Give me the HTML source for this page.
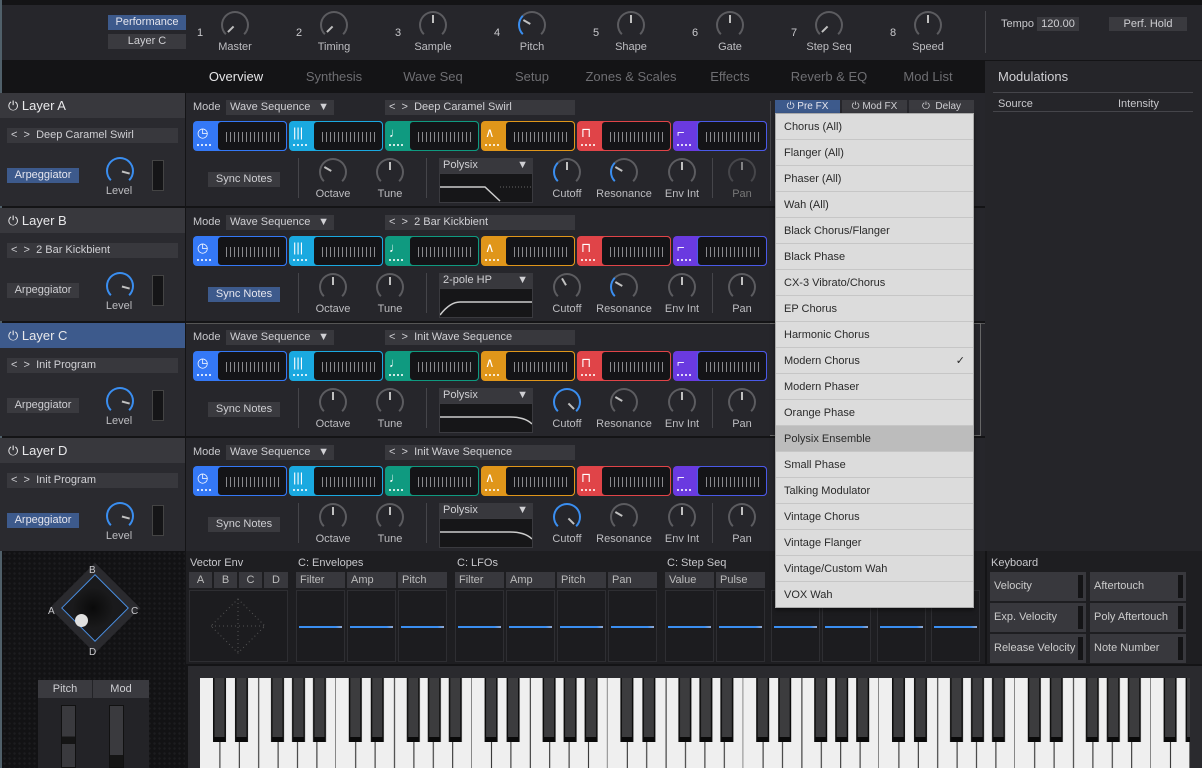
<!DOCTYPE html>
<html><head><meta charset="utf-8">
<style>
*{box-sizing:border-box;margin:0;padding:0}
body{width:1202px;height:768px;overflow:hidden;background:#141416;font-family:"Liberation Sans",sans-serif;font-size:11px;color:#c8c8cc;position:relative}
.a{position:absolute}
.t{position:absolute;white-space:nowrap}
.kn{position:absolute;width:28px;height:28px;border-radius:50%;border:2px solid #5c5c60;border-bottom-color:transparent}
.kn::after{content:'';position:absolute;left:11px;top:2px;width:2px;height:8px;background:#c0c0c0;transform-origin:1px 10px;transform:rotate(var(--r,0deg))}
.btn{position:absolute;background:#3a3a3f;color:#cfcfd3;text-align:center;font-size:11px;line-height:15px}
.blue{background:#3d5a8c;color:#e6e6ee}
.strip{position:absolute;top:28px;height:30px;width:94px;border-radius:4px}
.strip .in{position:absolute;left:24px;top:0;right:0;bottom:0;background:#141417;border-radius:4px;border:1px solid;
 background-image:repeating-linear-gradient(90deg,#8a8a8e 0 1px,transparent 1px 4px);background-size:calc(100% - 12px) 10px;background-position:8px 10px;background-repeat:no-repeat}
.strip .ic{position:absolute;left:4px;top:4px;color:#fff;font-size:13px}
.strip .dots{position:absolute;left:4px;top:23px;width:16px;height:2px;background:repeating-linear-gradient(90deg,#fff 0 2px,transparent 2px 4px);opacity:.8}
.layer{position:absolute;left:0;width:985px;height:113px}
.lh{position:absolute;left:0;top:0;width:185px;height:25px;background:#38383d;color:#e8e8ea;font-size:13px;line-height:25px;padding-left:8px}
.lb{position:absolute;left:0;top:25px;width:185px;height:88px;background:#2a2a2f}
.main{position:absolute;left:186px;top:0;width:799px;height:113px;background:#26262b}
.lbl{position:absolute;font-size:11px;color:#bdbdc1;text-align:center;width:70px}
.sel{position:absolute;background:#38383d;height:15px;line-height:15px;font-size:11px;color:#d0d0d4;padding-left:4px}
.vd{position:absolute;width:1px;background:#45454a}
.dd{position:absolute;left:775px;top:113px;width:199px;height:495px;background:#dcdcdc;border:1px solid #aaa;box-shadow:0 2px 4px rgba(0,0,0,.5)}
.dd div{height:26px;line-height:26px;padding-left:8px;color:#2a2a2a;font-size:11px;border-bottom:1px solid #c6c6c6}
.tab{position:absolute;top:69px;font-size:13px;color:#6e6e72;text-align:center;width:100px}
.env{position:absolute;top:572px;height:16px;background:#38383d;font-size:11px;color:#bbb;line-height:16px;padding-left:4px}
.eb{position:absolute;top:590px;height:72px;background:#1c1c1f;border:1px solid #2e2e32}
.eb::after{content:'';position:absolute;left:2px;right:2px;top:35px;height:2px;background:linear-gradient(90deg,#3a8ef0,#3a8ef0 85%,#9ac)}
.kb{position:absolute;height:29px;background:#38383d;font-size:11px;color:#ccc;line-height:29px;padding-left:4px}
.kb::after{content:'';position:absolute;right:3px;top:3px;width:5px;height:23px;background:#141416}
</style></head><body>
<div class="a" style="left:0;top:0;width:2px;height:768px;background:#50606a"></div>
<!-- top panel -->
<div class="a" style="left:2px;top:5px;width:1200px;height:55px;background:#26262b"></div>
<div class="btn blue" style="left:108px;top:15px;width:78px;height:15px">Performance</div>
<div class="btn" style="left:108px;top:34px;width:78px;height:15px">Layer C</div>
<div class="t" style="left:197px;top:27px">1</div><div class="kn" style="left:221px;top:11px;--r:-135deg;border-bottom-color:transparent"></div><div class="lbl" style="left:200px;top:41px">Master</div>
<div class="t" style="left:296px;top:27px">2</div><div class="kn" style="left:320px;top:11px;--r:-135deg"></div><div class="lbl" style="left:299px;top:41px">Timing</div>
<div class="t" style="left:395px;top:27px">3</div><div class="kn" style="left:419px;top:11px;--r:0deg"></div><div class="lbl" style="left:398px;top:41px">Sample</div>
<div class="t" style="left:494px;top:27px">4</div><div class="kn" style="left:518px;top:11px;--r:-60deg;border-left-color:#3a8ef0"></div><div class="lbl" style="left:497px;top:41px">Pitch</div>
<div class="t" style="left:593px;top:27px">5</div><div class="kn" style="left:617px;top:11px;--r:0deg"></div><div class="lbl" style="left:596px;top:41px">Shape</div>
<div class="t" style="left:692px;top:27px">6</div><div class="kn" style="left:716px;top:11px;--r:0deg"></div><div class="lbl" style="left:695px;top:41px">Gate</div>
<div class="t" style="left:791px;top:27px">7</div><div class="kn" style="left:815px;top:11px;--r:-135deg"></div><div class="lbl" style="left:794px;top:41px">Step Seq</div>
<div class="t" style="left:890px;top:27px">8</div><div class="kn" style="left:914px;top:11px;--r:0deg"></div><div class="lbl" style="left:893px;top:41px">Speed</div>
<div class="vd" style="left:985px;top:11px;height:42px"></div>
<div class="t" style="left:1001px;top:18px">Tempo</div>
<div class="btn" style="left:1037px;top:17px;width:42px;height:14px;line-height:14px">120.00</div>
<div class="btn" style="left:1109px;top:17px;width:78px;height:14px;line-height:14px">Perf. Hold</div>
<!-- nav -->
<div class="tab" style="left:186px;color:#e6e6e8">Overview</div>
<div class="tab" style="left:284px">Synthesis</div>
<div class="tab" style="left:383px">Wave Seq</div>
<div class="tab" style="left:482px">Setup</div>
<div class="tab" style="left:581px">Zones &amp; Scales</div>
<div class="tab" style="left:680px">Effects</div>
<div class="tab" style="left:779px">Reverb &amp; EQ</div>
<div class="tab" style="left:878px">Mod List</div>
<div class="a" style="left:985px;top:61px;width:217px;height:490px;background:#252529"></div>
<div class="t" style="left:998px;top:69px;font-size:13px;color:#d0d0d4">Modulations</div>
<div class="a" style="left:993px;top:92px;width:200px;height:1px;background:#45454a"></div>
<div class="t" style="left:998px;top:98px">Source</div><div class="t" style="left:1118px;top:98px">Intensity</div>
<div class="a" style="left:993px;top:111px;width:200px;height:1px;background:#45454a"></div>

<!-- LAYERS -->
<div class="layer" style="top:93px">
 <div class="lh">⏻ Layer A</div><div class="lb"></div>
 <div class="sel" style="left:7px;top:35px;width:171px">&lt; &nbsp;&gt; &nbsp;Deep Caramel Swirl</div>
 <div class="btn blue" style="left:7px;top:75px;width:72px">Arpeggiator</div>
 <div class="kn" style="left:106px;top:64px;--r:105deg;border-color:#3a8ef0;border-bottom-color:transparent"></div><div class="lbl" style="left:84px;top:92px">Level</div>
 <div class="a" style="left:152px;top:67px;width:12px;height:31px;background:#151517;border:1px solid #444"></div>
 <div class="main"></div>
 <div class="t" style="left:193px;top:8px">Mode</div>
 <div class="sel" style="left:226px;top:7px;width:108px">Wave Sequence<span style="position:absolute;right:5px">▼</span></div>
 <div class="sel" style="left:385px;top:7px;width:190px">&lt; &nbsp;&gt; &nbsp;Deep Caramel Swirl</div>
 <div class="strip" style="left:193px;background:#3478f6"><span class="ic">◷</span><i class="dots"></i><div class="in" style="border-color:#3478f6"></div></div>
 <div class="strip" style="left:289px;background:#1aa9e0"><span class="ic">|||</span><i class="dots"></i><div class="in" style="border-color:#1aa9e0"></div></div>
 <div class="strip" style="left:385px;background:#0f9a80"><span class="ic">♩</span><i class="dots"></i><div class="in" style="border-color:#0f9a80"></div></div>
 <div class="strip" style="left:481px;background:#e0961a"><span class="ic">∧</span><i class="dots"></i><div class="in" style="border-color:#e0961a"></div></div>
 <div class="strip" style="left:577px;background:#e04448"><span class="ic">⊓</span><i class="dots"></i><div class="in" style="border-color:#e04448"></div></div>
 <div class="strip" style="left:673px;background:#6a3ae0"><span class="ic">⌐</span><i class="dots"></i><div class="in" style="border-color:#4a5ae8"></div></div>
 <div class="btn" style="left:208px;top:79px;width:72px">Sync Notes</div>
 <div class="vd" style="left:298px;top:65px;height:40px"></div>
 <div class="kn" style="left:319px;top:65px;--r:-60deg"></div><div class="lbl" style="left:298px;top:95px">Octave</div>
 <div class="kn" style="left:376px;top:65px"></div><div class="lbl" style="left:355px;top:95px">Tune</div>
 <div class="vd" style="left:426px;top:65px;height:40px"></div>
 <div class="sel" style="left:439px;top:65px;width:94px">Polysix<span style="position:absolute;right:5px">▼</span></div>
 <div class="a" style="left:439px;top:80px;width:94px;height:30px;background:#161618;border:1px solid #3a3a3f"><svg width="92" height="28"><path d="M0 13 H45 L60 27" stroke="#ccc" fill="none" stroke-width="1.5"/><path d="M60 13 H92" stroke="#666" stroke-dasharray="1 2"/></svg></div>
 <div class="kn" style="left:553px;top:65px;border-left-color:#3a8ef0"></div><div class="lbl" style="left:532px;top:95px">Cutoff</div>
 <div class="kn" style="left:610px;top:65px;--r:-60deg;border-left-color:#3a8ef0"></div><div class="lbl" style="left:589px;top:95px">Resonance</div>
 <div class="kn" style="left:668px;top:65px"></div><div class="lbl" style="left:647px;top:95px">Env Int</div>
 <div class="vd" style="left:712px;top:65px;height:40px"></div>
 <div class="kn" style="left:728px;top:65px;opacity:.6"></div><div class="lbl" style="left:707px;top:95px;color:#777">Pan</div>
 <div class="vd" style="left:770px;top:8px;height:100px"></div>
</div>

<div class="layer" style="top:208px">
 <div class="lh">⏻ Layer B</div><div class="lb"></div>
 <div class="sel" style="left:7px;top:35px;width:171px">&lt; &nbsp;&gt; &nbsp;2 Bar Kickbient</div>
 <div class="btn" style="left:7px;top:75px;width:72px">Arpeggiator</div>
 <div class="kn" style="left:106px;top:64px;--r:105deg;border-color:#3a8ef0;border-bottom-color:transparent"></div><div class="lbl" style="left:84px;top:92px">Level</div>
 <div class="a" style="left:152px;top:67px;width:12px;height:31px;background:#151517;border:1px solid #444"></div>
 <div class="main"></div>
 <div class="t" style="left:193px;top:8px">Mode</div>
 <div class="sel" style="left:226px;top:7px;width:108px">Wave Sequence<span style="position:absolute;right:5px">▼</span></div>
 <div class="sel" style="left:385px;top:7px;width:190px">&lt; &nbsp;&gt; &nbsp;2 Bar Kickbient</div>
 <div class="strip" style="left:193px;background:#3478f6"><span class="ic">◷</span><i class="dots"></i><div class="in" style="border-color:#3478f6"></div></div>
 <div class="strip" style="left:289px;background:#1aa9e0"><span class="ic">|||</span><i class="dots"></i><div class="in" style="border-color:#1aa9e0"></div></div>
 <div class="strip" style="left:385px;background:#0f9a80"><span class="ic">♩</span><i class="dots"></i><div class="in" style="border-color:#0f9a80"></div></div>
 <div class="strip" style="left:481px;background:#e0961a"><span class="ic">∧</span><i class="dots"></i><div class="in" style="border-color:#e0961a"></div></div>
 <div class="strip" style="left:577px;background:#e04448"><span class="ic">⊓</span><i class="dots"></i><div class="in" style="border-color:#e04448"></div></div>
 <div class="strip" style="left:673px;background:#6a3ae0"><span class="ic">⌐</span><i class="dots"></i><div class="in" style="border-color:#4a5ae8"></div></div>
 <div class="btn blue" style="left:208px;top:79px;width:72px">Sync Notes</div>
 <div class="vd" style="left:298px;top:65px;height:40px"></div>
 <div class="kn" style="left:319px;top:65px"></div><div class="lbl" style="left:298px;top:95px">Octave</div>
 <div class="kn" style="left:376px;top:65px"></div><div class="lbl" style="left:355px;top:95px">Tune</div>
 <div class="vd" style="left:426px;top:65px;height:40px"></div>
 <div class="sel" style="left:439px;top:65px;width:94px">2-pole HP<span style="position:absolute;right:5px">▼</span></div>
 <div class="a" style="left:439px;top:80px;width:94px;height:30px;background:#161618;border:1px solid #3a3a3f"><svg width="92" height="28"><path d="M0 26 Q10 13 20 13 H92" stroke="#ccc" fill="none" stroke-width="1.5"/></svg></div>
 <div class="kn" style="left:553px;top:65px;--r:-30deg"></div><div class="lbl" style="left:532px;top:95px">Cutoff</div>
 <div class="kn" style="left:610px;top:65px;--r:-60deg;border-left-color:#3a8ef0"></div><div class="lbl" style="left:589px;top:95px">Resonance</div>
 <div class="kn" style="left:668px;top:65px"></div><div class="lbl" style="left:647px;top:95px">Env Int</div>
 <div class="vd" style="left:712px;top:65px;height:40px"></div>
 <div class="kn" style="left:728px;top:65px"></div><div class="lbl" style="left:707px;top:95px">Pan</div>
</div>

<div class="layer" style="top:323px">
 <div class="lh" style="background:#3d5a8c">⏻ Layer C</div><div class="lb"></div>
 <div class="sel" style="left:7px;top:35px;width:171px">&lt; &nbsp;&gt; &nbsp;Init Program</div>
 <div class="btn" style="left:7px;top:75px;width:72px">Arpeggiator</div>
 <div class="kn" style="left:106px;top:64px;--r:105deg;border-color:#3a8ef0;border-bottom-color:transparent"></div><div class="lbl" style="left:84px;top:92px">Level</div>
 <div class="a" style="left:152px;top:67px;width:12px;height:31px;background:#151517;border:1px solid #444"></div>
 <div class="main" style="border-top:1px solid #555"></div>
 <div class="t" style="left:193px;top:8px">Mode</div>
 <div class="sel" style="left:226px;top:7px;width:108px">Wave Sequence<span style="position:absolute;right:5px">▼</span></div>
 <div class="sel" style="left:385px;top:7px;width:190px">&lt; &nbsp;&gt; &nbsp;Init Wave Sequence</div>
 <div class="strip" style="left:193px;background:#3478f6"><span class="ic">◷</span><i class="dots"></i><div class="in" style="border-color:#3478f6"></div></div>
 <div class="strip" style="left:289px;background:#1aa9e0"><span class="ic">|||</span><i class="dots"></i><div class="in" style="border-color:#1aa9e0"></div></div>
 <div class="strip" style="left:385px;background:#0f9a80"><span class="ic">♩</span><i class="dots"></i><div class="in" style="border-color:#0f9a80"></div></div>
 <div class="strip" style="left:481px;background:#e0961a"><span class="ic">∧</span><i class="dots"></i><div class="in" style="border-color:#e0961a"></div></div>
 <div class="strip" style="left:577px;background:#e04448"><span class="ic">⊓</span><i class="dots"></i><div class="in" style="border-color:#e04448"></div></div>
 <div class="strip" style="left:673px;background:#6a3ae0"><span class="ic">⌐</span><i class="dots"></i><div class="in" style="border-color:#4a5ae8"></div></div>
 <div class="btn" style="left:208px;top:79px;width:72px">Sync Notes</div>
 <div class="vd" style="left:298px;top:65px;height:40px"></div>
 <div class="kn" style="left:319px;top:65px"></div><div class="lbl" style="left:298px;top:95px">Octave</div>
 <div class="kn" style="left:376px;top:65px"></div><div class="lbl" style="left:355px;top:95px">Tune</div>
 <div class="vd" style="left:426px;top:65px;height:40px"></div>
 <div class="sel" style="left:439px;top:65px;width:94px">Polysix<span style="position:absolute;right:5px">▼</span></div>
 <div class="a" style="left:439px;top:80px;width:94px;height:30px;background:#161618;border:1px solid #3a3a3f"><svg width="92" height="28"><path d="M0 13 H70 Q85 13 92 20" stroke="#ccc" fill="none" stroke-width="1.5"/></svg></div>
 <div class="kn" style="left:553px;top:65px;--r:135deg;border-color:#3a8ef0;border-bottom-color:transparent"></div><div class="lbl" style="left:532px;top:95px">Cutoff</div>
 <div class="kn" style="left:610px;top:65px;--r:-60deg"></div><div class="lbl" style="left:589px;top:95px">Resonance</div>
 <div class="kn" style="left:668px;top:65px"></div><div class="lbl" style="left:647px;top:95px">Env Int</div>
 <div class="vd" style="left:712px;top:65px;height:40px"></div>
 <div class="kn" style="left:728px;top:65px"></div><div class="lbl" style="left:707px;top:95px">Pan</div>
 <div class="a" style="left:770px;top:0;width:211px;height:113px;border:1px solid #666;border-left:none"></div>
</div>

<div class="layer" style="top:438px">
 <div class="lh">⏻ Layer D</div><div class="lb"></div>
 <div class="sel" style="left:7px;top:35px;width:171px">&lt; &nbsp;&gt; &nbsp;Init Program</div>
 <div class="btn blue" style="left:7px;top:75px;width:72px">Arpeggiator</div>
 <div class="kn" style="left:106px;top:64px;--r:105deg;border-color:#3a8ef0;border-bottom-color:transparent"></div><div class="lbl" style="left:84px;top:92px">Level</div>
 <div class="a" style="left:152px;top:67px;width:12px;height:31px;background:#151517;border:1px solid #444"></div>
 <div class="main"></div>
 <div class="t" style="left:193px;top:8px">Mode</div>
 <div class="sel" style="left:226px;top:7px;width:108px">Wave Sequence<span style="position:absolute;right:5px">▼</span></div>
 <div class="sel" style="left:385px;top:7px;width:190px">&lt; &nbsp;&gt; &nbsp;Init Wave Sequence</div>
 <div class="strip" style="left:193px;background:#3478f6"><span class="ic">◷</span><i class="dots"></i><div class="in" style="border-color:#3478f6"></div></div>
 <div class="strip" style="left:289px;background:#1aa9e0"><span class="ic">|||</span><i class="dots"></i><div class="in" style="border-color:#1aa9e0"></div></div>
 <div class="strip" style="left:385px;background:#0f9a80"><span class="ic">♩</span><i class="dots"></i><div class="in" style="border-color:#0f9a80"></div></div>
 <div class="strip" style="left:481px;background:#e0961a"><span class="ic">∧</span><i class="dots"></i><div class="in" style="border-color:#e0961a"></div></div>
 <div class="strip" style="left:577px;background:#e04448"><span class="ic">⊓</span><i class="dots"></i><div class="in" style="border-color:#e04448"></div></div>
 <div class="strip" style="left:673px;background:#6a3ae0"><span class="ic">⌐</span><i class="dots"></i><div class="in" style="border-color:#4a5ae8"></div></div>
 <div class="btn" style="left:208px;top:79px;width:72px">Sync Notes</div>
 <div class="vd" style="left:298px;top:65px;height:40px"></div>
 <div class="kn" style="left:319px;top:65px"></div><div class="lbl" style="left:298px;top:95px">Octave</div>
 <div class="kn" style="left:376px;top:65px"></div><div class="lbl" style="left:355px;top:95px">Tune</div>
 <div class="vd" style="left:426px;top:65px;height:40px"></div>
 <div class="sel" style="left:439px;top:65px;width:94px">Polysix<span style="position:absolute;right:5px">▼</span></div>
 <div class="a" style="left:439px;top:80px;width:94px;height:30px;background:#161618;border:1px solid #3a3a3f"><svg width="92" height="28"><path d="M0 13 H70 Q85 13 92 20" stroke="#ccc" fill="none" stroke-width="1.5"/></svg></div>
 <div class="kn" style="left:553px;top:65px;--r:135deg;border-color:#3a8ef0;border-bottom-color:transparent"></div><div class="lbl" style="left:532px;top:95px">Cutoff</div>
 <div class="kn" style="left:610px;top:65px;--r:-60deg"></div><div class="lbl" style="left:589px;top:95px">Resonance</div>
 <div class="kn" style="left:668px;top:65px"></div><div class="lbl" style="left:647px;top:95px">Env Int</div>
 <div class="vd" style="left:712px;top:65px;height:40px"></div>
 <div class="kn" style="left:728px;top:65px"></div><div class="lbl" style="left:707px;top:95px">Pan</div>
</div>

<!-- FX tabs -->
<div class="btn blue" style="left:775px;top:100px;width:65px;height:13px;line-height:13px;font-size:10px">⏻ Pre FX</div>
<div class="btn" style="left:842px;top:100px;width:65px;height:13px;line-height:13px;font-size:10px">⏻ Mod FX</div>
<div class="btn" style="left:909px;top:100px;width:65px;height:13px;line-height:13px;font-size:10px">⏻ &nbsp;Delay</div>

<!-- bottom -->
<div class="a" style="left:2px;top:551px;width:183px;height:217px;background:#121214;background-image:radial-gradient(#1c1c1f 1px,transparent 1.5px);background-size:5px 5px"></div>
<div class="a" style="left:63px;top:576px;width:64px;height:64px;transform:rotate(45deg);background:#2a2a2e;border:0 solid"></div>
<div class="a" style="left:71px;top:584px;width:48px;height:48px;transform:rotate(45deg);border:1.5px solid #4a8ee0;background:#1a1a1c"></div>
<div class="a" style="left:73px;top:588px;width:40px;height:40px;border-radius:50%;background:radial-gradient(#0a0a0a,#202022)"></div>
<div class="a" style="left:75px;top:614px;width:13px;height:13px;border-radius:50%;background:#e0e0e0"></div>
<div class="t" style="left:89px;top:565px;font-size:10px">B</div><div class="t" style="left:48px;top:606px;font-size:10px">A</div>
<div class="t" style="left:131px;top:606px;font-size:10px">C</div><div class="t" style="left:89px;top:647px;font-size:10px">D</div>
<div class="a" style="left:38px;top:680px;width:111px;height:88px;background:#232327"></div>
<div class="btn" style="left:38px;top:680px;width:54px;height:18px;line-height:18px">Pitch</div>
<div class="btn" style="left:93px;top:680px;width:56px;height:18px;line-height:18px">Mod</div>
<div class="a" style="left:61px;top:705px;width:15px;height:63px;background:linear-gradient(#3a3a3e 0 50%,#151515 50% 62%,#3a3a3e 62%);border:1px solid #111"></div>
<div class="a" style="left:109px;top:705px;width:15px;height:63px;background:linear-gradient(#3a3a3e 0 80%,#151515 80%);border:1px solid #111"></div>

<div class="a" style="left:186px;top:551px;width:799px;height:113px;background:#1e1e21"></div>
<div class="t" style="left:190px;top:557px">Vector Env</div>
<div class="env" style="left:189px;top:572px;width:23px;text-align:center;padding:0">A</div>
<div class="env" style="left:214px;width:23px;text-align:center;padding:0">B</div>
<div class="env" style="left:239px;width:23px;text-align:center;padding:0">C</div>
<div class="env" style="left:264px;width:24px;text-align:center;padding:0">D</div>
<div class="a" style="left:189px;top:590px;width:99px;height:72px;background:#1c1c1f;border:1px solid #2e2e32"><svg width="97" height="70"><path d="M48 8 L75 35 L48 62 L21 35 Z M48 8 V62 M21 35 H75" stroke="#555" stroke-dasharray="1 3" fill="none"/></svg></div>
<div class="t" style="left:298px;top:557px">C: Envelopes</div>
<div class="env" style="left:296px;width:49px">Filter</div><div class="eb" style="left:296px;width:49px"></div>
<div class="env" style="left:347px;width:49px">Amp</div><div class="eb" style="left:347px;width:49px"></div>
<div class="env" style="left:398px;width:49px">Pitch</div><div class="eb" style="left:398px;width:49px"></div>
<div class="t" style="left:457px;top:557px">C: LFOs</div>
<div class="env" style="left:455px;width:49px">Filter</div><div class="eb" style="left:455px;width:49px"></div>
<div class="env" style="left:506px;width:49px">Amp</div><div class="eb" style="left:506px;width:49px"></div>
<div class="env" style="left:557px;width:49px">Pitch</div><div class="eb" style="left:557px;width:49px"></div>
<div class="env" style="left:608px;width:49px">Pan</div><div class="eb" style="left:608px;width:49px"></div>
<div class="t" style="left:667px;top:557px">C: Step Seq</div>
<div class="env" style="left:665px;width:49px">Value</div><div class="eb" style="left:665px;width:49px"></div>
<div class="env" style="left:716px;width:49px">Pulse</div><div class="eb" style="left:716px;width:49px"></div>
<div class="eb" style="left:771px;width:49px"></div><div class="eb" style="left:822px;width:49px"></div>
<div class="eb" style="left:877px;width:49px"></div><div class="eb" style="left:931px;width:49px"></div>

<div class="a" style="left:987px;top:551px;width:215px;height:113px;background:#1e1e21"></div>
<div class="t" style="left:991px;top:557px">Keyboard</div>
<div class="kb" style="left:990px;top:572px;width:96px">Velocity</div>
<div class="kb" style="left:1090px;top:572px;width:96px">Aftertouch</div>
<div class="kb" style="left:990px;top:603px;width:96px">Exp. Velocity</div>
<div class="kb" style="left:1090px;top:603px;width:96px">Poly Aftertouch</div>
<div class="kb" style="left:990px;top:634px;width:96px">Release Velocity</div>
<div class="kb" style="left:1090px;top:634px;width:96px">Note Number</div>

<!-- keyboard -->
<div class="a" style="left:188px;top:666px;width:1014px;height:102px;background:#2a2a2e"></div>
<svg class="a" style="left:200px;top:678px" width="990" height="90">
<defs><pattern id="oct" x="0" y="0" width="135.8" height="90" patternUnits="userSpaceOnUse">
<rect width="135.8" height="90" fill="#efefef"/>
<g fill="#222"><rect x="19.4" width="1" height="90"/><rect x="38.8" width="1" height="90"/><rect x="58.2" width="1" height="90"/><rect x="77.6" width="1" height="90"/><rect x="97" width="1" height="90"/><rect x="116.4" width="1" height="90"/><rect x="135.3" width="1" height="90"/></g>
<g fill="#0a0a0a"><rect x="13" width="13" height="64"/><rect x="35" width="13" height="64"/><rect x="71" width="13" height="64"/><rect x="92" width="13" height="64"/><rect x="113" width="13" height="64"/></g>
<g fill="#3c3c3e"><rect x="14.5" width="10" height="59"/><rect x="36.5" width="10" height="59"/><rect x="72.5" width="10" height="59"/><rect x="93.5" width="10" height="59"/><rect x="114.5" width="10" height="59"/></g>
</pattern></defs>
<rect width="990" height="90" fill="url(#oct)"/>
</svg>

<!-- dropdown -->
<div class="dd">
<div>Chorus (All)</div><div>Flanger (All)</div><div>Phaser (All)</div><div>Wah (All)</div><div>Black Chorus/Flanger</div><div>Black Phase</div><div>CX-3 Vibrato/Chorus</div><div>EP Chorus</div><div>Harmonic Chorus</div><div>Modern Chorus<span style="float:right;margin-right:8px">✓</span></div><div>Modern Phaser</div><div>Orange Phase</div><div style="background:#bcbcbc">Polysix Ensemble</div><div>Small Phase</div><div>Talking Modulator</div><div>Vintage Chorus</div><div>Vintage Flanger</div><div>Vintage/Custom Wah</div><div style="border:none">VOX Wah</div>
</div>
</body></html>
